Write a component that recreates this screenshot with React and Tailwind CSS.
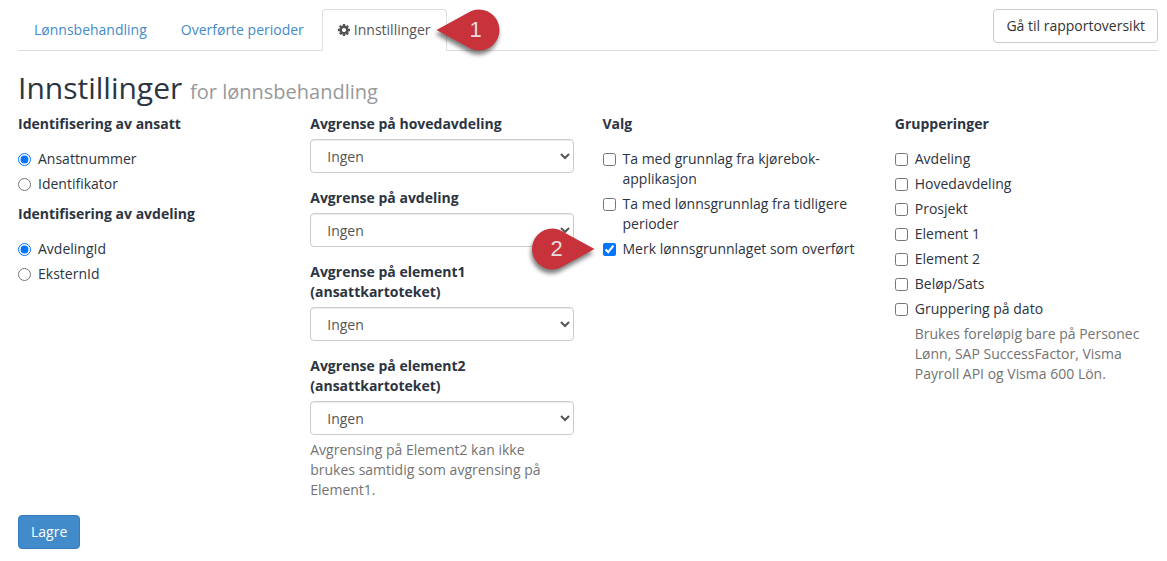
import React, { useState } from 'react';

const filters = [
  { id: 'hovedavdeling', label: 'Avgrense på hovedavdeling' },
  { id: 'avdeling', label: 'Avgrense på avdeling' },
  { id: 'element1', label: 'Avgrense på element1 (ansattkartoteket)' },
  {
    id: 'element2',
    label: 'Avgrense på element2 (ansattkartoteket)',
    help: 'Avgrensing på Element2 kan ikke brukes samtidig som avgrensing på Element1.',
  },
];

const groupings = [
  'Avdeling',
  'Hovedavdeling',
  'Prosjekt',
  'Element 1',
  'Element 2',
  'Beløp/Sats',
];

const GearIcon = () => (
  <svg viewBox="0 128 1536 1536" fill="currentColor" className="h-3 w-3" aria-hidden="true">
    <path d="M1024 896q0-106-75-181t-181-75-181 75-75 181 75 181 181 75 181-75 75-181zm512-109v222q0 12-8 23t-20 13l-185 28q-19 54-39 91 35 50 107 138 10 12 10 25t-9 23q-27 37-99 108t-94 71q-12 0-26-9l-138-108q-44 23-91 38-16 136-29 186-7 28-36 28h-222q-14 0-24.5-8.5t-11.5-21.5l-28-184q-49-16-90-37l-141 107q-10 9-25 9-14 0-25-11-126-114-165-168-7-10-7-23 0-12 8-23 15-21 51-66.5t54-70.5q-27-50-41-99l-183-27q-13-2-21-12.5t-8-23.5v-222q0-12 8-23t19-13l186-28q14-46 39-92-40-57-107-138-10-12-10-24 0-10 9-23 26-36 98.5-107.5t94.5-71.5q13 0 26 10l138 107q44-23 91-38 16-136 29-186 7-28 36-28h222q14 0 24.5 8.5t11.5 21.5l28 184q49 16 90 37l142-107q9-9 24-9 13 0 25 10 129 119 165 170 7 8 7 22 0 12-8 23-15 21-51 66.5t-54 70.5q26 50 41 98l183 28q13 2 21 12.5t8 23.5z" />
  </svg>
);

const Marker = ({ number, pointsRight = false, className }) => (
  <span
    className={`pointer-events-none absolute top-1/2 z-10 h-[42px] w-16 -translate-y-1/2 ${className}`}
  >
    <svg
      viewBox="0 0 64 42"
      className="h-full w-full overflow-visible drop-shadow-[-1px_4px_2px_rgba(0,0,0,0.5)]"
      aria-hidden="true"
    >
      <path
        d={
          pointsRight
            ? 'M63.5 21 L31 3.2 C28 1.3 25 .5 21.5 .5 A20.5 20.5 0 0 0 21.5 41.5 C25 41.5 28 40.7 31 38.8 Z'
            : 'M.5 21 L33 3.2 C36 1.3 39 .5 43 .5 A20.5 20.5 0 0 1 43 41.5 C39 41.5 36 40.7 33 38.8 Z'
        }
        fill="#c8323a"
      />
    </svg>
    <span
      className={`absolute inset-0 flex items-center justify-center font-['Liberation_Sans',sans-serif] text-[22px] leading-none text-[#e6dcdd] ${
        pointsRight ? 'pr-3' : 'pl-4'
      }`}
    >
      {number}
    </span>
  </span>
);

const Choice = ({ type = 'checkbox', children, marker, ...inputProps }) => (
  <label className="relative flex items-start gap-[7px]">
    <input type={type} className="mt-1 h-[13px] w-[13px] shrink-0" {...inputProps} />
    <span>{children}</span>
    {marker}
  </label>
);

const RadioGroup = ({ name, legend, options }) => {
  const [value, setValue] = useState(options[0]);

  return (
    <fieldset>
      <legend className="mb-[15px] font-bold">{legend}</legend>
      <div className="space-y-[5px]">
        {options.map((option) => (
          <Choice
            key={option}
            type="radio"
            name={name}
            checked={value === option}
            onChange={() => setValue(option)}
          >
            {option}
          </Choice>
        ))}
      </div>
    </fieldset>
  );
};

const App = () => (
  <div className="bg-white pt-[9px] pr-[9px] pb-3 pl-[18px] font-['Open_Sans',sans-serif] text-sm leading-5 text-[#2c343f]">
    <nav className="flex items-start justify-between border-b border-[#dddddd]">
      <ul className="-mb-px flex gap-[2px]">
        <li>
          <a href="#lonn" className="block border border-transparent px-[15px] py-[10px] text-[#428bca]">
            Lønnsbehandling
          </a>
        </li>
        <li>
          <a href="#perioder" className="block border border-transparent px-[15px] py-[10px] text-[#428bca]">
            Overførte perioder
          </a>
        </li>
        <li className="relative">
          <a
            href="#innstillinger"
            aria-current="page"
            className="flex items-center gap-1 rounded-t border border-[#dddddd] border-b-white bg-white px-[15px] py-[10px] text-[#555555]"
          >
            <GearIcon />
            Innstillinger
          </a>
          <Marker number="1" className="left-full -ml-[11px]" />
        </li>
      </ul>
      <button
        type="button"
        className="rounded border border-[#cccccc] bg-white px-3 py-[6px] text-[#333333]"
      >
        Gå til rapportoversikt
      </button>
    </nav>

    <h1 className="mt-5 mb-[10px] text-[30px] leading-[33px]">
      Innstillinger <small className="text-[20px] leading-none text-[#999999]">for lønnsbehandling</small>
    </h1>

    <form onSubmit={(event) => event.preventDefault()}>
      <div className="grid grid-cols-4 gap-[29px]">
        <div className="space-y-[10px]">
          <RadioGroup
            name="ansatt"
            legend="Identifisering av ansatt"
            options={['Ansattnummer', 'Identifikator']}
          />
          <RadioGroup
            name="avdeling"
            legend="Identifisering av avdeling"
            options={['AvdelingId', 'EksternId']}
          />
        </div>

        <div className="space-y-[15px]">
          {filters.map(({ id, label, help }) => (
            <div key={id}>
              <label htmlFor={id} className="mb-[5px] block font-bold">
                {label}
              </label>
              <select
                id={id}
                className="block h-[34px] w-full rounded border border-[#cccccc] bg-white px-3 py-[6px] text-[#555555] shadow-[inset_0_1px_1px_rgba(0,0,0,0.075)]"
              >
                <option>Ingen</option>
              </select>
              {help ? <p className="mt-[5px] pr-2 text-[#737373]">{help}</p> : null}
            </div>
          ))}
        </div>

        <fieldset>
          <legend className="mb-[15px] font-bold">Valg</legend>
          <div className="space-y-[5px]">
            <Choice>Ta med grunnlag fra kjørebok-applikasjon</Choice>
            <Choice>Ta med lønnsgrunnlag fra tidligere perioder</Choice>
            <Choice
              defaultChecked
              marker={<Marker number="2" pointsRight className="right-full mr-2" />}
            >
              Merk lønnsgrunnlaget som overført
            </Choice>
          </div>
        </fieldset>

        <fieldset>
          <legend className="mb-[15px] font-bold">Grupperinger</legend>
          <div className="space-y-[5px]">
            {groupings.map((grouping) => (
              <Choice key={grouping}>{grouping}</Choice>
            ))}
            <Choice aria-describedby="dato-help">Gruppering på dato</Choice>
            <p id="dato-help" className="pl-5 text-[#737373]">
              Brukes foreløpig bare på Personec Lønn, SAP SuccessFactor, Visma Payroll API og Visma 600
              Lön.
            </p>
          </div>
        </fieldset>
      </div>

      <button
        type="submit"
        className="mt-[15px] rounded border border-[#357ebd] bg-[#428bca] px-3 py-[6px] text-white"
      >
        Lagre
      </button>
    </form>
  </div>
);

export default App;
